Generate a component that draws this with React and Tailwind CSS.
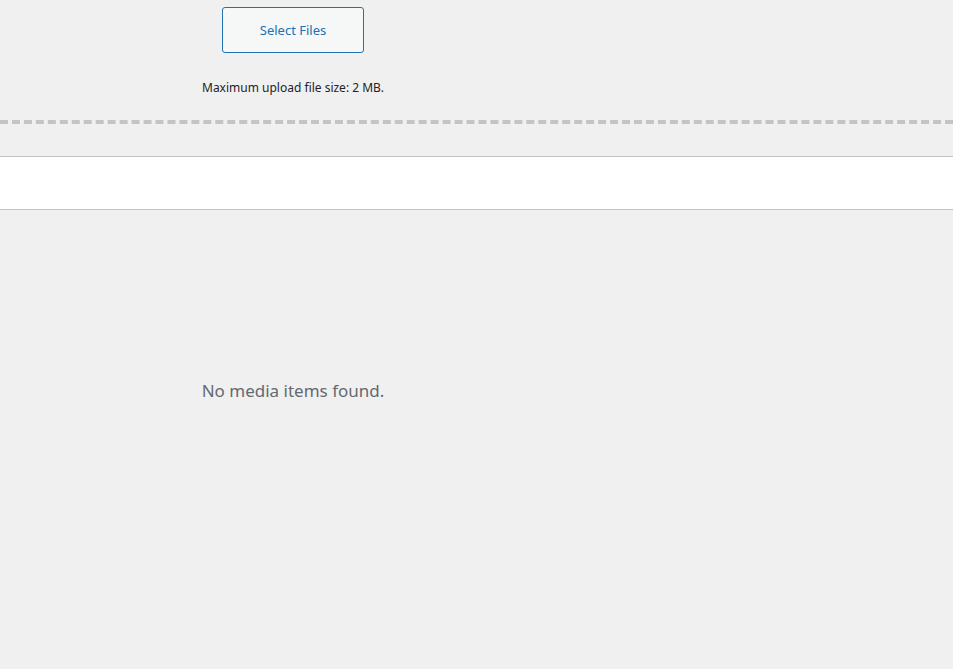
import React from 'react';

const App = () => {
    return (
        <div
            className="min-h-[669px] bg-[#f0f0f1] text-[#3c434a]"
            style={{ fontFamily: '"Noto Sans", "Open Sans", sans-serif' }}
        >
            {/* Upload area */}
            <div className="w-[586px] pt-[7px] flex flex-col items-center">
                <button className="w-[142px] h-[46px] pt-[2px] bg-[#f6f7f7] border border-[#2271b1] rounded-[3px] text-[13px] text-[#2271b1]">
                    Select Files
                </button>
                <p className="mt-[26px] text-[12px] text-[#1d2327]">
                    Maximum upload file size: 2 MB.
                </p>
            </div>

            {/* Dashed drop-zone edge */}
            <div className="mt-[23px] border-t-4 border-dashed border-[#c3c4c7]" />

            {/* Toolbar */}
            <div className="mt-[32px] h-[54px] bg-white border-y border-[#c3c4c7]" />

            {/* Empty state */}
            <div className="w-[586px] pt-[169px] text-center">
                <p className="text-[17px] leading-[24px] text-[#646970]">No media items found.</p>
            </div>
        </div>
    );
};

export default App;
